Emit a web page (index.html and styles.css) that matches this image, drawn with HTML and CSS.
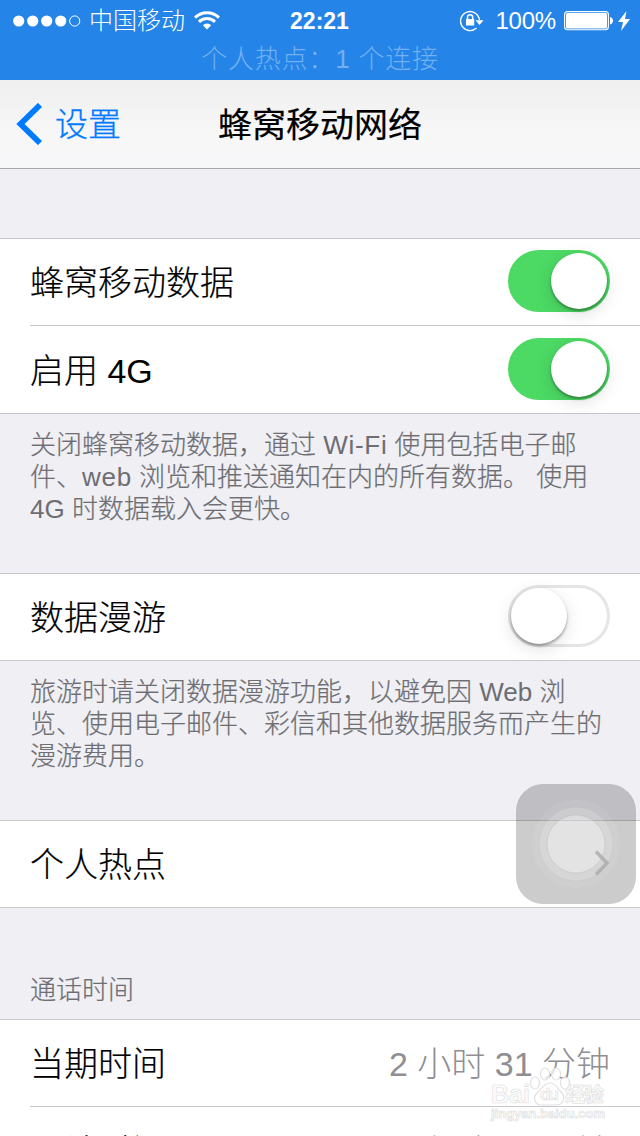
FILE: index.html
```html
<!DOCTYPE html>
<html lang="zh-CN">
<head>
<meta charset="utf-8">
<title>蜂窝移动网络</title>
<link rel="stylesheet" href="styles.css">
</head>
<body>
<div class="screen">
  <header class="status">
    <div class="status-row">
      <div class="status-left">
        <svg class="signal" width="68" height="12" viewBox="0 0 68 12" fill="#fff"><circle cx="5.7" cy="6" r="5.6"/><circle cx="19.7" cy="6" r="5.6"/><circle cx="33.7" cy="6" r="5.6"/><circle cx="47.7" cy="6" r="5.6"/><circle cx="61.7" cy="6" r="5.1" fill="none" stroke="#fff"/></svg>
        <span class="carrier">中国移动</span>
        <svg class="wifi" width="26" height="19" viewBox="0 0 26 19" fill="none" stroke="#fff" stroke-width="3"><path d="M1 6.6a17 17 0 0 1 24 0"/><path d="M5 10.9a11.3 11.3 0 0 1 16 0"/><path d="M8.800 14.2a5.8 5.8 0 0 1 8.400 0L13 18.600z" fill="#fff" stroke="none"/></svg>
      </div>
      <span class="clock">22:21</span>
      <div class="status-right">
        <svg class="lock" width="24" height="22" viewBox="0 0 24 22" fill="none" stroke="#fff"><path d="M16.5 18.1A9.5 9.5 0 1 1 19.5 10" stroke-width="1.4"/><path d="M15.500 10.300h8l-4 4.700z" fill="#fff" stroke="none"/><rect x="6" y="9" width="8.2" height="6.5" fill="#fff" stroke="none"/><path d="M7.5 9.5V7.3a2.6 2.6 0 0 1 5.2 0v2.2" stroke-width="1.5"/></svg>
        <span class="percent">100%</span>
        <svg class="battery" width="50" height="20" viewBox="0 0 50 20" fill="#fff"><rect x=".6" y=".6" width="43.8" height="18.2" rx="3" fill="none" stroke="#fff" stroke-width="1.1"/><rect x="2" y="2" width="41" height="15.4" rx="1.5"/><path d="M46 6c4 1 4 6.500 0 7.500z"/></svg>
        <svg class="bolt" width="12" height="20" viewBox="0 0 12 20" fill="#fff"><path d="M8.500 0 0 11h5L3 20l9-12H7z"/></svg>
      </div>
    </div>
    <div class="hotspot">个人热点：1 个连接</div>
  </header>
  <nav class="nav">
    <svg class="back" width="26" height="42" viewBox="0 0 26 42" fill="none" stroke="#007aff" stroke-width="5.800"><path d="M24 2 4.500 21 24 40"/></svg>
    <span class="back-label">设置</span>
    <h1 class="title">蜂窝移动网络</h1>
  </nav>
  <main>
    <section class="group first">
      <div class="row"><span class="label">蜂窝移动数据</span><span class="switch on"><i class="knob"></i></span></div>
      <div class="row second"><span class="label">启用 <span class="plain">4G</span></span><span class="switch on"><i class="knob"></i></span></div>
    </section>
    <p class="note">关闭蜂窝移动数据，通过 <span class="latin">Wi-Fi</span> 使用包括电子邮<br>件、<span class="latin">web</span> 浏览和推送通知在内的所有数据。 使用<br><span class="plain">4G</span> 时数据载入会更快。</p>
    <section class="group">
      <div class="row"><span class="label">数据漫游</span><span class="switch"><i class="knob"></i></span></div>
    </section>
    <p class="note">旅游时请关闭数据漫游功能，以避免因 <span class="plain">Web</span> 浏<br>览、使用电子邮件、彩信和其他数据服务而产生的<br>漫游费用。</p>
    <section class="group hotspot-group">
      <div class="row"><span class="label">个人热点</span></div>
      <svg class="assistive" width="120" height="120" viewBox="0 0 120 120"><rect width="120" height="120" rx="27" fill="#000" fill-opacity=".2"/><circle cx="60" cy="60" r="44" fill="#fff" fill-opacity=".07"/><circle cx="60" cy="60" r="37" fill="#fff" fill-opacity=".15" stroke="#999" stroke-opacity=".1"/><circle cx="60" cy="60" r="29" fill="#fff" fill-opacity=".32" stroke="#888" stroke-opacity=".18"/><path d="M80 67.500 91 79 80 90.500" fill="none" stroke="#a8a8ac" stroke-opacity=".75" stroke-width="3.500"/></svg>
    </section>
    <h2 class="section-title">通话时间</h2>
    <section class="group">
      <div class="row"><span class="label">当期时间</span><span class="value">2 小时 31 分钟</span></div>
      <div class="row second last"><span class="label">累计时间</span><span class="value">2 小时 31 分钟</span></div>
    </section>
  </main>
  <svg class="watermark" width="124" height="60" viewBox="0 0 124 60" fill="#fff" fill-opacity=".75" stroke="#e0e0e0" stroke-width="1.2">
    <ellipse cx="48" cy="16" rx="4.500" ry="6"/><ellipse cx="58" cy="7" rx="4.500" ry="6"/><ellipse cx="69" cy="7" rx="4.500" ry="6"/><ellipse cx="78" cy="16" rx="4.500" ry="6"/>
    <path d="M63 16c6 0 7 5 11 9 5 5 3 13-5 13H55c-8 0-10-8-4-13 4-4 6-9 12-9z"/>
    <g class="watermark-text">
      <text x="4" y="36" font-size="26" textLength="39" lengthAdjust="spacingAndGlyphs">Bai</text>
      <text x="53" y="33" font-size="17" textLength="19">du</text>
      <text x="78" y="35" font-size="20" textLength="39">经验</text>
      <text x="4" y="51" font-size="13" textLength="114">jingyan.baidu.com</text>
    </g>
  </svg>
</div>
</body>
</html>
```
FILE: styles.css
```css
* { box-sizing: border-box; }
body { margin: 0; background: #efeff4; font-family: "Liberation Sans", "Noto Sans CJK SC", sans-serif; font-weight: 300; }
svg { display: block; flex: none; }
.screen { width: 640px; height: 1136px; overflow: hidden; position: relative; }
.status { height: 80px; background: #2484e8; color: #fff; }
.status-row { height: 41px; display: grid; grid-template-columns: 1fr auto 1fr; align-items: center; padding: 0 10px 0 13px; font-size: 24px; line-height: 40px; }
.status-left, .status-right { display: flex; align-items: center; }
.carrier { margin: 1px 9px 0 8px; }
.clock { font-weight: 700; font-size: 23px; margin-left: -4px; }
.status-right { justify-content: flex-end; }
.percent { margin: 1px 8px 0 11px; letter-spacing: -0.2px; }
.bolt { margin-left: 4px; }
.hotspot { text-align: center; font-size: 26px; line-height: 36px; color: #72b0f1; letter-spacing: 0.8px; }
.nav { height: 89px; border-bottom: 1px solid #a7a7aa; background: linear-gradient(#efefef, #f7f7f8 60%, #f7f7f9); display: grid; grid-template-columns: 39px 163px 1fr; align-items: center; padding-left: 16px; }
.back-label { color: #007aff; font-size: 33px; line-height: 48px; padding-top: 2px; -webkit-text-stroke: 0.3px; }
.title { margin: 0; padding-top: 2px; font-size: 34px; font-weight: 400; line-height: 48px; -webkit-text-stroke: 0.2px; }
.group { background: #fff; border-top: 1px solid #c8c7cc; border-bottom: 1px solid #c8c7cc; }
.first { margin-top: 69px; }
.row { height: 86px; display: flex; align-items: center; justify-content: space-between; padding: 0 30px; font-size: 34px; line-height: 50px; }
.second { height: 88px; margin-left: 30px; padding-left: 0; border-top: 1px solid #c8c7cc; }
.last { padding-top: 1px; }
.label { padding-top: 2px; -webkit-text-stroke: 0.2px; }
.value { color: #8e8e93; padding-top: 2px; }
.switch { width: 102px; height: 62px; border-radius: 31px; border: 3px solid #e5e5e5; display: flex; flex: none; margin-top: -2px; }
.on { background: #4cd964; border-color: #4cd964; justify-content: flex-end; }
.knob { width: 56px; height: 56px; border-radius: 50%; background: #fff; box-shadow: 0 2px 3px rgba(0,0,0,.35), 0 5px 18px rgba(0,0,0,.12); }
.note { margin: 0; height: 159px; padding: 15px 0 0 30px; color: #6d6d72; font-size: 26px; line-height: 32px; white-space: nowrap; -webkit-text-stroke: 0.2px; }
.latin { letter-spacing: 0.7px; -webkit-text-stroke: 0; }
.plain { -webkit-text-stroke: 0; }
.hotspot-group { position: relative; }
.assistive { position: absolute; left: 516px; top: -37px; }
.section-title { margin: 0; height: 111px; padding: 66px 30px 0; font-size: 26px; line-height: 32px; font-weight: 300; color: #6d6d72; -webkit-text-stroke: 0.2px; }
.watermark { position: absolute; left: 487px; top: 1067px; }
.watermark-text { font-weight: 700; stroke-width: 0.6px; fill: #fafafa; stroke: #dcdcdc; }
```
